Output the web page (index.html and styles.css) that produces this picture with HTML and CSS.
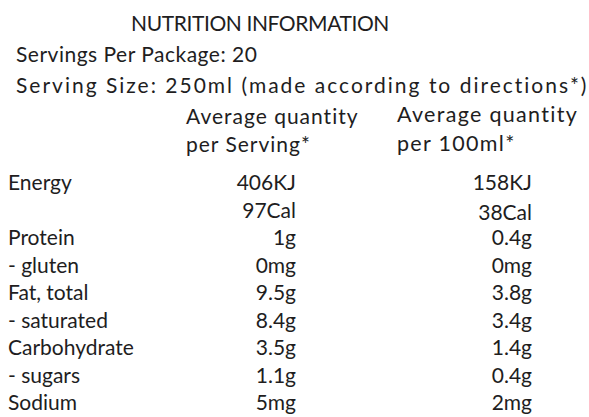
FILE: index.html
```html
<!DOCTYPE html>
<html>
<head>
<meta charset="utf-8">
<link rel="stylesheet" href="styles.css">
</head>
<body>
<div class="panel">
  <h1 class="title">NUTRITION INFORMATION</h1>
  <p class="meta meta-pack">Servings Per Package: 20</p>
  <p class="meta meta-size">Serving Size: 250ml (made according to directions*)</p>
  <div class="heads">
    <div class="head head-1">Average quantity<br>per Serving*</div>
    <div class="head head-2">Average quantity<br>per 100ml*</div>
  </div>
  <div class="table">
    <div class="lbl">Energy</div><div class="v1">406KJ</div><div class="v2">158KJ</div>
    <div class="lbl"></div><div class="v1">97Cal</div><div class="v2 low">38Cal</div>
    <div class="lbl">Protein</div><div class="v1">1g</div><div class="v2">0.4g</div>
    <div class="lbl">- gluten</div><div class="v1">0mg</div><div class="v2">0mg</div>
    <div class="lbl">Fat, total</div><div class="v1">9.5g</div><div class="v2">3.8g</div>
    <div class="lbl">- saturated</div><div class="v1">8.4g</div><div class="v2">3.4g</div>
    <div class="lbl">Carbohydrate</div><div class="v1">3.5g</div><div class="v2">1.4g</div>
    <div class="lbl">- sugars</div><div class="v1">1.1g</div><div class="v2">0.4g</div>
    <div class="lbl">Sodium</div><div class="v1">5mg</div><div class="v2">2mg</div>
  </div>
</div>
</body>
</html>
```
FILE: styles.css
```css
html, body {
  margin: 0;
  padding: 0;
  background: #ffffff;
}
body {
  font-family: "Lato", "Liberation Sans", sans-serif;
  color: #211d1e;
  font-size: 21px;
}
.panel {
  width: 589px;
  padding-top: 8px;
}
.title {
  margin: 0;
  width: 520px;
  text-align: center;
  font-weight: 400;
  font-size: 21px;
  line-height: 30px;
  letter-spacing: -0.4px;
}
.meta {
  margin: 0;
  padding-left: 16px;
  line-height: 31px;
  white-space: nowrap;
}
.meta-pack { letter-spacing: 0.5px; }
.meta-size { letter-spacing: 2px; }
.heads {
  display: grid;
  grid-template-columns: 186px 211px 1fr;
  margin-top: 2px;
}
.head {
  line-height: 28px;
  letter-spacing: 1px;
  white-space: nowrap;
}
.head-1 { grid-column: 2; }
.head-2 {
  grid-column: 3;
  margin-top: -2px;
  font-size: 21.5px;
  line-height: 29px;
  letter-spacing: 1.3px;
}
.table {
  display: grid;
  grid-template-columns: 186px 211px 1fr;
  grid-auto-rows: 27.5px;
  margin-top: 10px;
  line-height: 27.5px;
}
.lbl {
  padding-left: 8px;
  white-space: nowrap;
}
.v1 {
  text-align: right;
  padding-right: 101px;
}
.v2 {
  text-align: right;
  padding-right: 57px;
}
.low { padding-top: 2px; }
```
